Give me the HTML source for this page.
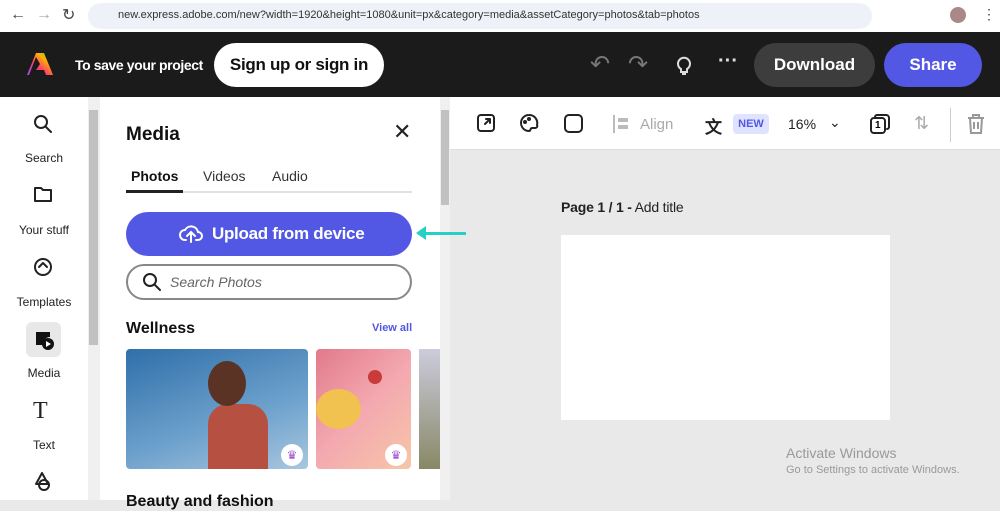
<!DOCTYPE html>
<html><head><meta charset="utf-8"><style>
*{margin:0;padding:0;box-sizing:border-box}
body{width:1000px;height:500px;overflow:hidden;font-family:"Liberation Sans",sans-serif;background:#e9e9e9;position:relative}
.a{position:absolute}
.ico{stroke:#222;fill:none;stroke-width:2;stroke-linecap:round;stroke-linejoin:round}
.rl{font-size:12px;color:#222;text-align:center;width:88px;left:0}
</style></head><body>
<!-- browser bar -->
<div class="a" style="left:0;top:0;width:1000px;height:32px;background:#fff"></div>
<div class="a" style="left:10px;top:6px;font-size:16px;color:#444">←</div>
<div class="a" style="left:36px;top:6px;font-size:16px;color:#aaa">→</div>
<div class="a" style="left:62px;top:5px;font-size:16px;color:#444">↻</div>
<div class="a" style="left:88px;top:3px;width:784px;height:26px;border-radius:13px;background:#eef1f8"></div>
<div class="a" style="left:118px;top:9px;font-size:11px;color:#333">new.express.adobe.com/new?width=1920&amp;height=1080&amp;unit=px&amp;category=media&amp;assetCategory=photos&amp;tab=photos</div>
<div class="a" style="left:950px;top:7px;width:16px;height:16px;border-radius:50%;background:#a88"></div>
<div class="a" style="left:982px;top:6px;font-size:14px;color:#444">⋮</div>
<!-- header -->
<div class="a" style="left:0;top:32px;width:1000px;height:65px;background:#1b1b1b"></div>
<svg class="a" style="left:26px;top:51px" width="28" height="26" viewBox="0 0 28 26"><defs><linearGradient id="g" x1="0" y1="1" x2="1" y2="0"><stop offset="0" stop-color="#9b4dff"/><stop offset=".4" stop-color="#ff3d6b"/><stop offset=".7" stop-color="#ffb000"/><stop offset="1" stop-color="#3ddc5a"/></linearGradient></defs><path d="M10 2h8l9 22h-7l-2-5h-8l4-6-4-7-7 18H1z" fill="url(#g)"/></svg>
<div class="a" style="left:75px;top:57px;font-size:14px;font-weight:bold;color:#fff;letter-spacing:-0.4px">To save your project</div>
<div class="a" style="left:214px;top:43px;width:170px;height:44px;border-radius:22px;background:#fff;font-size:17px;font-weight:bold;color:#111;text-align:center;line-height:44px;letter-spacing:-0.3px">Sign up or sign in</div>
<div class="a" style="left:590px;top:50px;font-size:24px;color:#777">↶</div>
<div class="a" style="left:628px;top:50px;font-size:24px;color:#777">↷</div>
<svg class="a" style="left:674px;top:54px" width="20" height="22" fill="none" stroke="#ddd" stroke-width="2"><path d="M7 15a6 6 0 1 1 6 0v3H7zM8 20h4"/></svg>
<div class="a" style="left:718px;top:50px;font-size:20px;color:#ddd;font-weight:bold">···</div>
<div class="a" style="left:754px;top:43px;width:121px;height:44px;border-radius:22px;background:#3d3d3d;color:#fff;font-size:17px;font-weight:bold;text-align:center;line-height:44px">Download</div>
<div class="a" style="left:884px;top:43px;width:98px;height:44px;border-radius:22px;background:#5258e4;color:#fff;font-size:17px;font-weight:bold;text-align:center;line-height:44px">Share</div>
<!-- left rail -->
<div class="a" style="left:0;top:97px;width:88px;height:403px;background:#fff"></div>
<div class="a" style="left:88px;top:97px;width:12px;height:403px;background:#f0f0f0"></div>
<div class="a" style="left:89px;top:110px;width:9px;height:235px;background:#c1c1c1"></div>
<svg class="a ico" style="left:33px;top:114px" width="20" height="20"><circle cx="8" cy="8" r="6"/><path d="M13 13l5 5"/></svg>
<div class="a rl" style="top:151px">Search</div>
<svg class="a ico" style="left:33px;top:185px" width="20" height="18"><path d="M2 3h6l2 2h8v11H2z"/></svg>
<div class="a rl" style="top:223px">Your stuff</div>
<svg class="a ico" style="left:33px;top:257px" width="20" height="20"><circle cx="10" cy="10" r="8"/><path d="M6 10l4-4 4 4"/></svg>
<div class="a rl" style="top:295px">Templates</div>
<div class="a" style="left:26px;top:322px;width:35px;height:35px;border-radius:6px;background:#e8e8e8"></div>
<svg class="a" style="left:33px;top:329px" width="22" height="22"><path d="M3 3h14v5a7 7 0 0 0-7 8H3z" fill="#111"/><circle cx="15" cy="15" r="6" fill="#111"/><path d="M13 12v6l5-3z" fill="#fff"/></svg>
<div class="a rl" style="top:366px">Media</div>
<div class="a" style="left:33px;top:398px;font-size:24px;font-family:'Liberation Serif',serif;color:#222">T</div>
<div class="a rl" style="top:438px">Text</div>
<svg class="a ico" style="left:32px;top:470px" width="22" height="22"><path d="M4 14l6-11 6 11z"/><circle cx="12" cy="15" r="5"/></svg>
<!-- panel -->
<div class="a" style="left:100px;top:97px;width:340px;height:403px;background:#fff"></div>
<div class="a" style="left:440px;top:97px;width:10px;height:403px;background:#f0f0f0"></div>
<div class="a" style="left:441px;top:110px;width:8px;height:95px;background:#c1c1c1"></div>
<div class="a" style="left:126px;top:124px;font-size:19px;font-weight:bold;color:#111">Media</div>
<div class="a" style="left:393px;top:119px;font-size:22px;color:#222">✕</div>
<div class="a" style="left:131px;top:168px;font-size:14px;font-weight:bold;color:#111">Photos</div>
<div class="a" style="left:203px;top:168px;font-size:14px;color:#333">Videos</div>
<div class="a" style="left:272px;top:168px;font-size:14px;color:#333">Audio</div>
<div class="a" style="left:126px;top:191px;width:286px;height:2px;background:#e1e1e1"></div>
<div class="a" style="left:126px;top:190px;width:57px;height:3px;background:#222"></div>
<div class="a" style="left:126px;top:212px;width:286px;height:44px;border-radius:22px;background:#5258e4;color:#fff;font-size:17px;font-weight:bold;line-height:44px;padding-left:86px;letter-spacing:-0.3px">Upload from device</div>
<svg class="a" style="left:179px;top:223px" width="24" height="22" fill="none" stroke="#fff" stroke-width="2" stroke-linecap="round"><path d="M7 17H6a5 5 0 0 1 0-10 7 7 0 0 1 13 2 4 4 0 0 1 0 8h-2M12 19v-9M8 13l4-4 4 4"/></svg>
<div class="a" style="left:418px;top:232px;width:48px;height:3px;background:#25d0c4"></div>
<div class="a" style="left:416px;top:226px;width:0;height:0;border-top:7px solid transparent;border-bottom:7px solid transparent;border-right:10px solid #25d0c4"></div>
<div class="a" style="left:126px;top:264px;width:286px;height:36px;border-radius:18px;border:2px solid #888"></div>
<svg class="a ico" style="left:142px;top:272px" width="20" height="20"><circle cx="8" cy="8" r="6"/><path d="M13 13l5 5"/></svg>
<div class="a" style="left:170px;top:274px;font-size:14px;font-style:italic;color:#666">Search Photos</div>
<div class="a" style="left:126px;top:320px;font-size:16px;font-weight:bold;color:#111">Wellness</div>
<div class="a" style="left:372px;top:322px;font-size:11px;font-weight:bold;color:#5258e4">View all</div>
<div class="a" style="left:126px;top:349px;width:182px;height:120px;border-radius:4px;background:linear-gradient(160deg,#2f6fa9,#6ea2cd 60%,#a9c6de);overflow:hidden">
<div class="a" style="left:82px;top:55px;width:60px;height:70px;background:#b65040;border-radius:20px 20px 0 0"></div>
<div class="a" style="left:82px;top:12px;width:38px;height:45px;border-radius:50%;background:#5a3324"></div></div>
<div class="a" style="left:316px;top:349px;width:95px;height:120px;border-radius:4px;background:linear-gradient(135deg,#e07a8a,#f4a8b0 50%,#f6c6a8)"><div class="a" style="left:0;top:40px;width:45px;height:40px;background:#f1c24f;border-radius:50%"></div><div class="a" style="left:52px;top:21px;width:14px;height:14px;border-radius:50%;background:#c93a3a"></div></div>
<div class="a" style="left:419px;top:349px;width:21px;height:120px;background:linear-gradient(#ccd,#886)"></div>
<div class="a" style="left:281px;top:444px;width:22px;height:22px;border-radius:50%;background:#fff;color:#a050d0;font-size:12px;text-align:center;line-height:22px">♛</div>
<div class="a" style="left:385px;top:444px;width:22px;height:22px;border-radius:50%;background:#fff;color:#a050d0;font-size:12px;text-align:center;line-height:22px">♛</div>
<div class="a" style="left:126px;top:493px;font-size:16px;font-weight:bold;color:#111">Beauty and fashion</div>
<!-- toolbar -->
<div class="a" style="left:450px;top:97px;width:550px;height:53px;background:#fff;border-bottom:1px solid #ddd"></div>
<svg class="a ico" style="left:476px;top:113px" width="20" height="20"><rect x="2" y="2" width="16" height="16" rx="3"/><path d="M9 11l5-5M10 6h4v4"/></svg>
<svg class="a ico" style="left:519px;top:113px" width="20" height="20"><path d="M10 2a8 8 0 1 0 0 16c2 0 1-3 3-3h3a2 2 0 0 0 2-3 8 8 0 0 0-8-10z"/><circle cx="6" cy="9" r="1"/><circle cx="10" cy="6" r="1"/></svg>
<svg class="a ico" style="left:563px;top:113px" width="21" height="21"><rect x="2" y="2" width="17" height="17" rx="4"/></svg>
<div class="a" style="left:613px;top:115px;width:2px;height:18px;background:#bbb"></div>
<div class="a" style="left:618px;top:118px;width:10px;height:4px;background:#bbb"></div>
<div class="a" style="left:618px;top:125px;width:10px;height:4px;background:#bbb"></div>
<div class="a" style="left:640px;top:116px;font-size:15px;color:#aaa">Align</div>
<div class="a" style="left:705px;top:113px;font-size:17px;font-weight:bold;color:#222">文</div>
<div class="a" style="left:733px;top:114px;width:36px;height:20px;border-radius:4px;background:#e0e3ff;color:#5258e4;font-size:11px;font-weight:bold;text-align:center;line-height:20px">NEW</div>
<div class="a" style="left:788px;top:116px;font-size:14px;color:#222">16%</div>
<div class="a" style="left:829px;top:114px;font-size:14px;color:#222">⌄</div>
<svg class="a ico" style="left:869px;top:113px" width="22" height="22"><rect x="2" y="5" width="14" height="15" rx="3"/><path d="M6 5V4a2 2 0 0 1 2-2h9a3 3 0 0 1 3 3v9a2 2 0 0 1-2 2"/></svg>
<div class="a" style="left:875px;top:120px;font-size:10px;font-weight:bold">1</div>
<div class="a" style="left:914px;top:113px;font-size:18px;color:#aaa">⇅</div>
<div class="a" style="left:950px;top:108px;width:1px;height:34px;background:#ccc"></div>
<svg class="a" style="left:966px;top:113px" width="20" height="22" fill="none" stroke="#999" stroke-width="2"><path d="M2 5h16M7 5V2h6v3M4 5l1 15h10l1-15M8 9v7M12 9v7"/></svg>
<!-- canvas -->
<div class="a" style="left:561px;top:199px;font-size:14px;color:#222;letter-spacing:-0.2px"><b>Page 1 / 1 -</b> Add title</div>
<div class="a" style="left:561px;top:235px;width:329px;height:185px;background:#fff"></div>
<div class="a" style="left:786px;top:445px;font-size:14px;color:#999">Activate Windows</div>
<div class="a" style="left:786px;top:464px;font-size:11px;color:#999">Go to Settings to activate Windows.</div>
</body></html>
